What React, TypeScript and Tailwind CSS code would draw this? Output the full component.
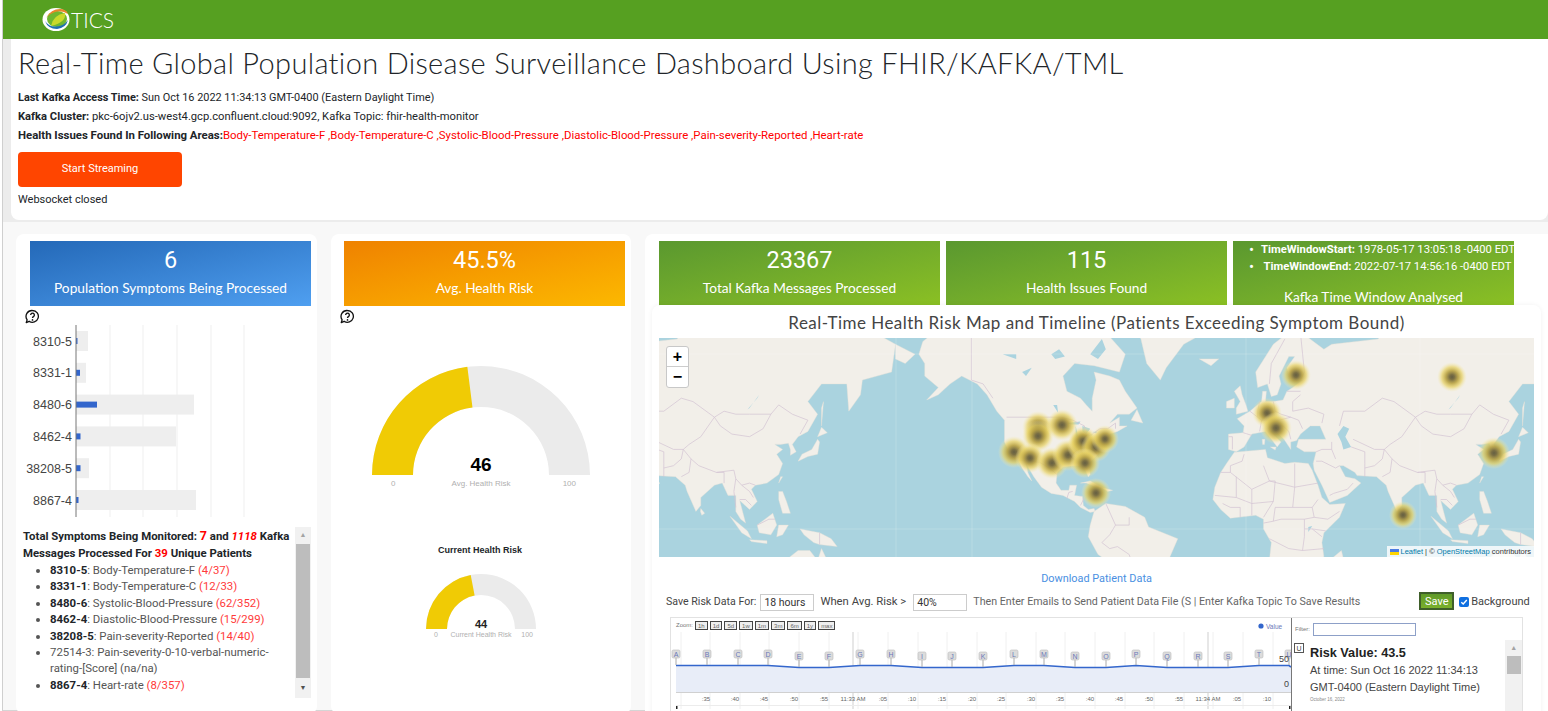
import React from "react";

const sans = "font-['Roboto','Noto_Sans',sans-serif]";

// map is a mercator projection, 701px per world
const MAP_W = 875;
const MAP_H = 219;
const WORLD = 701;
const project = (lon: number, lat: number): [number, number] => {
  const x = 587 + (lon * WORLD) / 360;
  const y = 189 - (WORLD / (2 * Math.PI)) * Math.log(Math.tan(Math.PI / 4 + (lat * Math.PI) / 360));
  return [x, y];
};
const toPath = (pts: number[], close = true) => {
  let d = "";
  for (let i = 0; i < pts.length; i += 2) {
    const [x, y] = project(pts[i], pts[i + 1]);
    d += (i === 0 ? "M" : "L") + x.toFixed(1) + " " + y.toFixed(1);
  }
  return close ? d + "Z" : d;
};

const land: number[][] = [
  // north america
  [-166,68.5,-156,71.3,-141,69.7,-128,72,-108,72,-80,73,-62,66,-65,62,-78,63.5,-88,64,-94,61,-92,57,-85,55,-82,53,-79,51,-79,55,-77,60,-78,62,-70,61,-65,60,-62,57,-56,52,-60,50,-66,50,-70,47,-65,49,-65,46,-61,46,-66,44,-70,43,-71,41.5,-74,40.5,-76,37,-76,35,-81,31,-80,26,-81,25,-82.5,28,-84,30,-89,30,-94,29.5,-97,27,-97.5,22,-95,18.5,-91,18.5,-90.5,21,-87,21,-88,16,-84,15.5,-83.5,11,-81,9,-78,9.5,-77.5,8,-80,7.5,-85,10,-88,13,-94,16,-100,17,-105,20,-109,25,-113,31,-112,27,-110,23,-112,25,-115,29,-117,32.5,-121,35,-124,40,-124,48,-128,51,-133,56,-138,59,-146,61,-152,59,-158,56,-164,54.5,-158,58,-165,61,-165,64,-168,66],
  // south america
  [-78,8,-72,12,-62,10.5,-52,5,-50,0,-35,-6,-39,-15,-41,-22,-48,-26,-58,-35,-70,-35,-70,-18,-76,-14,-81,-5,-80,1],
  // greenland
  [-54,69,-51,64,-44,60,-41,63,-32,68,-22,70,-25,75,-70,77],
  // africa
  [-6,35.8,10,37,11,33.5,20,31,25,31.5,32,31,34,28,37,21,39,15,43,11.5,51,12,48,5,40,-3,39,-8,40,-15,35,-20,33,-28,18,-34,12,-17,13,-8,9,-1,9,4,5,6,-4,5,-8,4.5,-13,9,-17,14,-16,20,-13,27,-10,31],
  // eurasia
  [-9,37,-9,43,-1.5,43.5,-1,46,-4.5,48.5,2,51,8,54,8.5,57,10.5,57,10,54,14,54,19,54.5,21,57,24,58,29,60,23,60,21,63,25,65.5,22,65.5,17,61,18,59,16,56,13,55.5,11,59,6,58,5,62,14,68,25,71,40,67,44,68,68,69,70,73,100,76,113,74,140,72,170,70,180,68,178,62,163,60,162,56,156,51,155,59,142,59,135,54,140,50,135,44,130,42,127,39,129,36,126,34.5,126,37,125,39.5,121,39,118,39,122,37,119,35,122,31,120,26,114,22,108,21,106,19,109,13,105,9,100,13.5,103,2,100.5,4,98,8,98,16,94,16,91,22,87,21,80,15,80,11,77.5,8,73,18,72,21,67,25,57,25.5,56,27,50,30,48,30,51,25,56,24,59,22,52,16,43,12.5,39,21,35,28,34.5,31,36,36,30,36,26,38,27,41,30,41,41,41,38,46,33,46,28,43,26,40.5,23,40,23,37,19.5,41,14,45,12.5,44,18,40,16,38,10,44,3,43,-1,38,-5,36],
  // chukotka tip past the date line
  [-180,68,-170,66,-175,64,-180,65],
  // islands
  [-5,50,1,51,0,53,-2,56,-3,58.5,-6,57,-3,54,-5,52],
  [-10,52,-6,52,-6,55,-10,54],
  [-24,65,-14,65,-18,63.5],
  [130,32,135,34,140,35,141,40,140,41,137,37,132,35],
  [140,42,145,43.5,142,45.5],
  [142,46,143,54,142,52],
  [120,22,122,25,121,25],
  [120,18,122,18,124,13,126,7,122,7,120,14],
  [109,1,117,7,119,1,116,-4,110,-3],
  [95,5.5,104,-2,106,-6,101,-3],
  [105,-6.5,114,-7,114,-8.5,106,-7.5],
  [119,-5,120,1,125,1,122,-4],
  [131,-1,141,-3,147,-6,150,-10,141,-9,138,-8,133,-4],
  [49,-12,50,-16,47,-25,44,-22,44,-16],
  [80,9.5,82,7,80.5,6,79.8,8],
  [-85,22,-80,23,-74,20,-77,20,-82,22],
  [-74,19.8,-68.5,18.5,-71,18],
  [-59,48,-53,47,-56,51.5],
  [113,-22,122,-18,130,-12,136,-12,140,-17,142,-11,146,-19,153,-26,113,-30],
  [12.5,38,15.5,38,15,36.7],
  [8.3,41,9.7,41,9.5,39,8.5,39],
];

const water: number[][] = [
  [50,46,53,45,51,42,54,38,50,37,49,40,47,43],
  [-92,47,-85,47.5,-86,46.5,-90,46.5],
  [-87.5,46,-86,42,-87.5,42],
  [-84,46,-80,45,-82,43,-84,44],
  [-83,42,-79,43,-79,42.5],
  [-79,43.8,-76.5,44,-77,43.3],
  [-99,53,-97,53,-96.5,50.5],
  [-125,66,-118,66,-118,65],
  [-115,62,-110,63,-113,61],
  [-100,66,-96,67,-93,65.5,-98,65],
  [-80,66,-74,69,-72,67,-76,65],
  [105,52,110,56,109,55,104,51.5],
  [33,-1,34,0.5,32,0,32,-2.5],
];

const borders: number[][] = [
  [-123,49,-95,49,-89,48,-83,46,-82,42,-79,43,-75,45,-71,45,-67,47,-67,45],
  [-141,69.7,-141,60,-135,59,-130,55],
  [-117,32.5,-106,31.5,-101,29,-97,26],
  [-92,14.5,-91,17.5,-89,18],
  [-83,15,-85,11],
  [-72,12,-67,1,-70,-4,-74,-8,-70,-11],
  [-60,5,-60,1,-67,1],
  [-58,-20,-60,-14,-66,-10,-70,-11],
  [2,51,6,49,8,48,7,44],
  [-1.5,43.5,3,42.5],
  [-9,42,-7,42,-7,37],
  [7,54,6,51,6,49],
  [14,54,15,51,18,50,23,49,27,48,29,45],
  [8,48,13,48,17,48,23,49],
  [14,46,19,46,22,44,23,41],
  [12,59,13,64,20,69],
  [28,70,30,62,28,60],
  [28,56,24,54,24,51,32,52,40,50,39,47],
  [21,57,28,57],
  [48,46,50,51,61,51,70,55,76,54,87,49],
  [87,49,92,51,98,50,105,50,116,50,120,53,127,50,135,48,131,43],
  [87,49,80,42,74,39,71,37,75,33,79,30,88,27,97,28,98,24,101,21,105,22,108,21],
  [116,50,112,45,105,42,96,43,90,46,87,49],
  [55,41,66,37,71,37],
  [54,38,61,36,61,31,61,25],
  [71,37,70,33,66,30,61,29],
  [75,33,74,27,70,25],
  [88,27,92,27,92,22],
  [98,24,97,18,98,10],
  [101,21,105,18,107,15],
  [100,14,103,14,106,11],
  [44,40,44,37,39,37,36,36],
  [46,33,44,37],
  [48,30,46,29,39,32,36,32],
  [55,22,52,19,45,17,43,16],
  [-8,27,-8,30,-2,32,-1,35],
  [-13,27,-8,27,3,19,12,23,25,20,37,22],
  [9,30,12,23,15,23,14,13,3,12,3,19],
  [25,31,25,20,24,10,34,10,37,14],
  [-16,16,-5,15,-5,25],
  [-5,15,3,12,3,6],
  [-12,12,-8,10,-3,10,-3,5],
  [14,13,9,5],
  [24,10,15,10,14,3,9,2],
  [34,10,35,5,42,4,48,8],
  [14,3,18,4,30,4,35,5],
  [30,4,30,-5,29,-12,22,-11,12,-6],
  [41,-2,34,-1,30,-1],
  [34,-1,39,-5],
  [29,-12,40,-11],
  [141,-3,141,-9],
  [109,1,115,4,118,4],
];

const heat: [number, number, number][] = [
  [637, 37, 15], [793, 39, 15], [608, 75, 15], [617, 90, 16],
  [379, 89, 16], [379, 98, 16], [403, 87, 16], [355, 114, 16], [371, 120, 15],
  [393, 125, 16], [409, 117, 16], [424, 108, 16], [424, 103, 15], [437, 109, 15], [446, 101, 14],
  [426, 125, 15], [437, 155, 15], [835, 115, 16], [744, 177, 14],
];

const seamsV = [237, 313, 587, 761];
const seamsH = [16, 191];

function WorldMap() {
  const landPath = land.map((p) => toPath(p)).join("");
  const waterPath = water.map((p) => toPath(p)).join("");
  const borderPath = borders.map((p) => toPath(p, false)).join("");
  return (
    <svg width={MAP_W} height={MAP_H} viewBox={`0 0 ${MAP_W} ${MAP_H}`} className="block bg-[#aad3df]">
      <defs>
        <radialGradient id="heatspot">
          <stop offset="0%" stopColor="#655f42" />
          <stop offset="16%" stopColor="#7a6f44" />
          <stop offset="42%" stopColor="#b9a345" stopOpacity="0.92" />
          <stop offset="68%" stopColor="#e6d060" stopOpacity="0.7" />
          <stop offset="100%" stopColor="#f7edb4" stopOpacity="0" />
        </radialGradient>
      </defs>
      {[0, -WORLD].map((dx) => (
        <g key={dx} transform={`translate(${dx} 0)`}>
          <path d={landPath} fill="#f2efe9" stroke="#e6e0d6" strokeWidth="0.4" strokeLinejoin="round" />
          <path d={waterPath} fill="#aad3df" />
          <path d={borderPath} fill="none" stroke="#d3c3d2" strokeWidth="0.7" />
        </g>
      ))}
      {seamsV.map((x) => (
        <line key={x} x1={x} x2={x} y1="0" y2={MAP_H} stroke="#ffffff" strokeOpacity="0.18" />
      ))}
      {seamsH.map((y) => (
        <line key={y} x1="0" x2={MAP_W} y1={y} y2={y} stroke="#ffffff" strokeOpacity="0.18" />
      ))}
      {heat.map(([x, y, r], i) => (
        <circle key={i} cx={x} cy={y} r={r} fill="url(#heatspot)" />
      ))}
    </svg>
  );
}

function Logo() {
  return (
    <svg width="28" height="25" viewBox="0 0 28 25">
      <ellipse cx="14" cy="12.5" rx="13.5" ry="11.5" fill="#ffffff" />
      <ellipse cx="15" cy="12" rx="10" ry="8" fill="#6fb72f" />
      <path d="M9 19 Q11 8 23 6 Q25 15 9 19Z" fill="#c9d92a" />
      <path d="M4 11 Q9 2 18 2 Q24 2 26 7 Q20 3 13 5 Q7 7 4 11Z" fill="#e8872a" />
      <path d="M3 14 Q6 22 15 22 Q24 21 26 13 Q22 19 14 19.5 Q7 20 3 14Z" fill="#1d6fb0" />
    </svg>
  );
}

function HelpIcon() {
  return (
    <svg width="15" height="15" viewBox="0 0 16 16" className="block">
      <path d="M8 1.6a6.3 6.3 0 1 1-3.6 11.5L1.3 14.5l1-3A6.3 6.3 0 0 1 8 1.6Z" fill="none" stroke="#111" strokeWidth="1.4" strokeLinejoin="round" />
      <path d="M6 6.3a2 2 0 1 1 3 1.8c-.7.4-1 .8-1 1.5" fill="none" stroke="#111" strokeWidth="1.4" />
      <circle cx="8" cy="11.6" r="0.9" fill="#111" />
    </svg>
  );
}

function Tile({ value, label, color, className }: { value: string; label: string; color: string; className: string }) {
  return (
    <div className={`h-[65px] flex flex-col items-center text-white ${color} ${className}`}>
      <div className="text-[23.5px] leading-[32px] mt-[3px]">{value}</div>
      <div className="text-[13.7px] leading-[18px] mt-[3px] font-['Lato',sans-serif]">{label}</div>
    </div>
  );
}

const bars = [
  { code: "8310-5", total: 12, hit: 1.5 },
  { code: "8331-1", total: 10, hit: 4 },
  { code: "8480-6", total: 118, hit: 21 },
  { code: "8462-4", total: 100, hit: 4.5 },
  { code: "38208-5", total: 13, hit: 4.5 },
  { code: "8867-4", total: 120, hit: 2.5 },
];

function BarChart() {
  return (
    <svg width="290" height="192" viewBox="0 0 290 192" className="block overflow-visible">
      {[110, 143, 177, 211, 244].map((x) => (
        <line key={x} x1={x - 30} x2={x - 30} y1="0" y2="192" stroke="#efefef" />
      ))}
      {bars.map((b, i) => {
        const y = 16 + i * 31.8;
        return (
          <g key={b.code}>
            <rect x="46" y={y - 10} width={b.total} height="20" fill="#eeeeee" />
            <rect x="46" y={y - 3} width={b.hit} height="6" fill="#3366cc" />
            <text x="42" y={y + 4.5} textAnchor="end" fontSize="12.5" fontFamily="Liberation Sans" fill="#444">
              {b.code}
            </text>
          </g>
        );
      })}
      <line x1="46" x2="46" y1="0" y2="192" stroke="#777" />
    </svg>
  );
}

// half donut, value is 0-100
function Gauge({ value, outer, inner }: { value: number; outer: number; inner: number }) {
  const w = outer * 2;
  const a = Math.PI * (1 - value / 100);
  const ox = outer + outer * Math.cos(a);
  const oy = outer - outer * Math.sin(a);
  const ix = outer + inner * Math.cos(a);
  const iy = outer - inner * Math.sin(a);
  const left = outer - inner;
  const right = outer + inner;
  return (
    <svg width={w} height={outer} viewBox={`0 0 ${w} ${outer}`} className="block">
      <path d={`M0 ${outer}A${outer} ${outer} 0 0 1 ${w} ${outer}L${right} ${outer}A${inner} ${inner} 0 0 0 ${left} ${outer}Z`} fill="#ebebeb" />
      <path d={`M0 ${outer}A${outer} ${outer} 0 0 1 ${ox} ${oy}L${ix} ${iy}A${inner} ${inner} 0 0 0 ${left} ${outer}Z`} fill="#f0cb05" />
    </svg>
  );
}

const flags = [
  ["A", 675, 0], ["B", 706, 0], ["C", 737, 0], ["D", 767, 0], ["E", 798, 2], ["F", 828, 2], ["G", 859, 0],
  ["H", 890, 0], ["I", 921, 2], ["J", 951, 2], ["K", 982, 2], ["L", 1013, 0], ["M", 1043, 0], ["N", 1074, 2],
  ["O", 1105, 2], ["P", 1135, 0], ["Q", 1166, 2], ["R", 1197, 2], ["S", 1227, 2], ["T", 1258, 0], ["U", 1288, 0],
] as const;

const ticks = [
  [":35", 705], [":40", 734], [":45", 763], [":50", 793], [":55", 823], ["11:33 AM", 852], [":05", 882], [":10", 911],
  [":15", 941], [":20", 971], [":25", 1000], [":30", 1030], [":35", 1059], [":40", 1089], [":45", 1118], [":50", 1148],
  [":55", 1178], ["11:34 AM", 1207], [":05", 1236], [":10", 1266],
] as const;

function Timeline() {
  const ox = 670;
  const line = flags.map(([, x, d]) => `${x - ox} ${d ? 49.5 : 47.5}`).join("L");
  return (
    <svg width="620" height="91" viewBox="0 0 620 91" className="block">
      {[680, 709, 739, 768, 798, 828, 857, 887, 917, 946, 976, 1005, 1035, 1064, 1094, 1124, 1153, 1183, 1212, 1242, 1272].map((x) => (
        <line key={x} x1={x - ox} x2={x - ox} y1="14" y2="91" stroke="#f0f0f0" />
      ))}
      <line x1={852 - ox} x2={852 - ox} y1="14" y2="91" stroke="#cfcfcf" />
      <line x1={1207 - ox} x2={1207 - ox} y1="14" y2="91" stroke="#cfcfcf" />
      <path d={`M${line}L${1290 - ox} 49L${1290 - ox} 74L5 74Z`} fill="#e8edf8" />
      <path d={`M${line}L${1290 - ox} 49`} fill="none" stroke="#3366cc" strokeWidth="1.6" />
      <line x1="5" x2={1290 - ox} y1="74.5" y2="74.5" stroke="#d0d0d0" />
      <line x1="5" x2={1290 - ox} y1="87.5" y2="87.5" stroke="#ececec" />
      <rect x="5" y="88" width="1.5" height="3" fill="#222" />
      <rect x={1288 - ox} y="88" width="1.5" height="3" fill="#222" />
      {flags.map(([l, x, d]) => (
        <g key={l}>
          <line x1={x - ox} x2={x - ox} y1={40 + d} y2={47 + d} stroke="#aaa" />
          <rect x={x - ox - 4} y={32 + d} width="8" height="8" rx="1.5" fill="#dcdcdc" stroke="#bbb" strokeWidth="0.6" />
          <text x={x - ox} y={38.5 + d} textAnchor="middle" fontSize="7" fontFamily="Liberation Sans" fill="#6a78b8">{l}</text>
        </g>
      ))}
      {ticks.map(([t, x], i) => (
        <text key={i} x={x - ox} y="83" textAnchor="middle" fontSize="6" fontFamily="Liberation Sans" fill="#666">{t}</text>
      ))}
      <text x={1288 - ox} y="44" textAnchor="end" fontSize="9" fontFamily="Liberation Sans" fill="#444">50</text>
      <text x={1288 - ox} y="69" textAnchor="end" fontSize="9" fontFamily="Liberation Sans" fill="#444">0</text>
      <circle cx={1260 - ox} cy="8" r="2.6" fill="#3366cc" />
      <text x={1265 - ox} y="10.5" fontSize="6.5" fontFamily="Liberation Sans" fill="#6a78b8">Value</text>
    </svg>
  );
}

const symptoms = [
  { code: "8310-5", name: "Body-Temperature-F", count: "(4/37)" },
  { code: "8331-1", name: "Body-Temperature-C", count: "(12/33)" },
  { code: "8480-6", name: "Systolic-Blood-Pressure", count: "(62/352)" },
  { code: "8462-4", name: "Diastolic-Blood-Pressure", count: "(15/299)" },
  { code: "38208-5", name: "Pain-severity-Reported", count: "(14/40)" },
];

const zoomBtns = ["1h", "1d", "5d", "1w", "1m", "3m", "6m", "1y", "max"];

export default function App() {
  return (
    <div className="w-[1548px] h-[711px] overflow-hidden bg-white pl-[2px]">
      <div className={`h-full bg-[#f8f8f8] border-l border-l-[#cfcfcf] border-b border-b-[#d5d5d5] text-[#212529] ${sans}`}>
        <div className="h-[39px] bg-[#56a021] flex items-center pl-[39px]">
          <Logo />
          <span className="ml-[1px] text-[21px] leading-none text-white font-['Lato',sans-serif] font-light">TICS</span>
        </div>

        <div className="h-[183px] bg-[#ececec] pb-[2px]">
          <div className="ml-[8px] h-[181px] bg-white rounded-b-[8px] pl-[7px] pt-[6px]">
            <h1 className="text-[29px] leading-[36px] font-['Lato',sans-serif] font-light tracking-[0.33px] text-[#212529]">
              Real-Time Global Population Disease Surveillance Dashboard Using FHIR/KAFKA/TML
            </h1>
            <div className="leading-[18.5px] mt-[8px]">
              <div className="text-[10.9px]"><b>Last Kafka Access Time:</b> Sun Oct 16 2022 11:34:13 GMT-0400 (Eastern Daylight Time)</div>
              <div className="text-[11.2px]"><b>Kafka Cluster:</b> pkc-6ojv2.us-west4.gcp.confluent.cloud:9092, Kafka Topic: fhir-health-monitor</div>
              <div className="text-[11.4px]"><b>Health Issues Found In Following Areas:</b><span className="text-[#ff0000]">Body-Temperature-F ,Body-Temperature-C ,Systolic-Blood-Pressure ,Diastolic-Blood-Pressure ,Pain-severity-Reported ,Heart-rate</span></div>
            </div>
            <button className="block mt-[7px] w-[164px] h-[35px] pt-[1px] rounded-[4px] bg-[#ff4500] text-white text-[11px]">Start Streaming</button>
            <div className="text-[11px] leading-[14px] mt-[6px]">Websocket closed</div>
          </div>
        </div>

        <div className="flex items-start mt-[12px] ml-[13px] gap-[14px]">
          {/* left column */}
          <div className="w-[301px] h-[480px] shrink-0 bg-white rounded-[8px] pl-[14px] pt-[7px]">
            <Tile value="6" label="Population Symptoms Being Processed" color="bg-gradient-to-br from-[#2469b8] to-[#4f9ff0]" className="w-[281px]" />
            <div className="-ml-[5px] mt-[3px]"><HelpIcon /></div>
            <div className="mt-[1px]"><BarChart /></div>
            <div className="flex mt-[10px] text-[11.4px]">
              <div className="w-[272px] -ml-[7px] leading-[17px]">
                <div className="font-bold text-[#212529] whitespace-nowrap">
                  <div>Total Symptoms Being Monitored: <span className="text-[#ff0000] text-[12.5px]">7</span> and <i className="text-[#ff0000]">1118</i> Kafka</div>
                  <div>Messages Processed For <span className="text-[#ff0000]">39</span> Unique Patients</div>
                </div>
                <ul className="list-disc pl-[27px] leading-[16.4px] text-[#555]">
                  {symptoms.map((s) => (
                    <li key={s.code}><b className="text-[#212529]">{s.code}</b>: {s.name} <span className="text-[#ff3b3b]">{s.count}</span></li>
                  ))}
                  <li>72514-3: Pain-severity-0-10-verbal-numeric-<br />rating-[Score] (na/na)</li>
                  <li><b className="text-[#212529]">8867-4</b>: Heart-rate <span className="text-[#ff3b3b]">(8/357)</span></li>
                </ul>
              </div>
              <div className="w-[16px] h-[171px] bg-[#f1f1f1] flex flex-col items-center">
                <span className="text-[#a3a3a3] text-[7px] leading-[17px]">▲</span>
                <div className="w-[14px] h-[134px] bg-[#bdbdbd]"></div>
                <span className="text-[#505050] text-[7px] leading-[20px]">▼</span>
              </div>
            </div>
          </div>

          {/* gauges */}
          <div className="w-[300px] h-[480px] shrink-0 bg-white rounded-[8px] pl-[13px] pt-[7px]">
            <Tile value="45.5%" label="Avg. Health Risk" color="bg-gradient-to-br from-[#ef8200] to-[#fcb800]" className="w-[281px]" />
            <div className="-ml-[4px] mt-[3px]"><HelpIcon /></div>
            <div className="w-[218px] ml-[28px] mt-[42px]">
              <Gauge value={46} outer={109} inner={68} />
              <div className="relative h-[16px] text-[8px] leading-[10px] text-[#b0b0b0] font-['Liberation_Sans',sans-serif]">
                <span className="absolute left-[19px] top-[4px]">0</span>
                <span className="absolute left-0 right-0 top-[4px] text-center">Avg. Health Risk</span>
                <span className="absolute right-[14px] top-[4px]">100</span>
                <span className="absolute left-0 right-0 -top-[21px] text-center text-[19px] leading-[22px] font-bold text-black">46</span>
              </div>
            </div>
            <div className="text-[9px] leading-[12px] font-bold text-center w-[272px] mt-[53px] font-['Liberation_Sans',sans-serif]">Current Health Risk</div>
            <div className="w-[110px] ml-[82px] mt-[18px]">
              <Gauge value={44} outer={55} inner={34} />
              <div className="relative h-[12px] text-[7px] leading-[8px] text-[#b0b0b0] font-['Liberation_Sans',sans-serif] whitespace-nowrap">
                <span className="absolute left-[8px] top-[2px]">0</span>
                <span className="absolute left-0 right-0 top-[2px] text-center">Current Health Risk</span>
                <span className="absolute right-[3px] top-[2px]">100</span>
                <span className="absolute left-0 right-0 -top-[11px] text-center text-[11px] leading-[13px] font-bold text-[#222]">44</span>
              </div>
            </div>
          </div>

          {/* right column */}
          <div className="flex-1 h-[480px] bg-white rounded-tl-[8px] pt-[7px] relative">
            <div className="flex pl-[14px] gap-[6px]">
              <Tile value="23367" label="Total Kafka Messages Processed" color="bg-gradient-to-br from-[#5a982f] to-[#8bc023]" className="w-[281px]" />
              <Tile value="115" label="Health Issues Found" color="bg-gradient-to-br from-[#5a982f] to-[#8bc023]" className="w-[281px]" />
              <div className="w-[281px] h-[65px] text-white bg-gradient-to-br from-[#5a982f] to-[#8bc023] text-[11.25px] leading-[16.5px]">
                <div className="text-center pt-[1px] whitespace-nowrap">
                  <div className="relative"><span className="absolute left-[16px] text-[15px]">•</span><span className="ml-[28px]"><b>TimeWindowStart:</b> 1978-05-17 13:05:18 -0400 EDT</span></div>
                  <div className="relative"><span className="absolute left-[16px] text-[15px]">•</span><span className="ml-[28px]"><b>TimeWindowEnd:</b> 2022-07-17 14:56:16 -0400 EDT</span></div>
                </div>
                <div className="text-[13.7px] leading-[18px] text-center mt-[13px] font-['Lato',sans-serif]">Kafka Time Window Analysed</div>
              </div>
            </div>

            <div className="ml-[7px] w-[889px] h-[410px] bg-white rounded-t-[8px] -mt-[1px] shadow-[0_0_5px_rgba(0,0,0,0.06)] relative">
              <div className="h-[33px] text-center text-[17px] leading-[35px] font-['Lato',sans-serif] text-[#444] tracking-[0.47px]">
                Real-Time Health Risk Map and Timeline (Patients Exceeding Symptom Bound)
              </div>
              <div className="ml-[7px] w-[875px] relative">
                <WorldMap />
                <div className="absolute left-[7px] top-[8px] w-[23px] bg-white rounded-[3px] border border-[#c8c8c8] text-black font-bold font-['Liberation_Sans',sans-serif] text-center">
                  <div className="h-[20px] leading-[19px] text-[16px] border-b border-[#ccc]">+</div>
                  <div className="h-[20px] leading-[19px] text-[16px]">−</div>
                </div>
                <div className="absolute right-0 bottom-0 h-[11px] pl-[3px] pr-[3px] bg-white/80 flex items-center text-[7.5px] leading-none text-[#333] font-['Liberation_Sans',sans-serif] whitespace-nowrap">
                  <svg width="9" height="6" viewBox="0 0 9 6" className="mr-[2px]"><rect width="9" height="3" fill="#4c7be1" /><rect y="3" width="9" height="3" fill="#ffd500" /></svg>
                  <span className="text-[#0078a8]">Leaflet</span>&nbsp;| ©&nbsp;<span className="text-[#0078a8]">OpenStreetMap</span>&nbsp;contributors
                </div>
              </div>

              <div className="text-center text-[10.9px] leading-[14px] text-[#4a90e2] mt-[15px]">Download Patient Data</div>
              <div className="flex items-center pl-[14px] h-[20px] mt-[6px] whitespace-nowrap text-[#444]">
                <span className="text-[10.6px]">Save Risk Data For:</span>
                <div className="ml-[4px] w-[54px] h-[17px] border border-[#ccc] text-[10.5px] leading-[16px] pl-[3px] text-[#333]">18 hours</div>
                <span className="ml-[6px] text-[11.3px]">When Avg. Risk &gt;</span>
                <div className="ml-[7px] w-[54px] h-[17px] border border-[#ccc] text-[10.5px] leading-[16px] pl-[3px] text-[#333]">40%</div>
                <span className="ml-[6px] text-[10.7px] text-[#666] w-[446px] shrink-0">Then Enter Emails to Send Patient Data File (S | Enter Kafka Topic To Save Results</span>
                <div className="w-[35px] h-[18px] -mt-[2px] bg-gradient-to-b from-[#5f9a28] to-[#7ab02c] border-2 border-[#3f5f2a] text-white text-[11px] leading-[15px] text-center">Save</div>
                <div className="ml-[5px] w-[10px] h-[10px] bg-[#0f6fe0] rounded-[2px] flex items-center justify-center">
                  <svg width="8" height="8" viewBox="0 0 8 8"><path d="M1.3 4.2 3.2 6 6.8 2" fill="none" stroke="#fff" strokeWidth="1.4" /></svg>
                </div>
                <span className="ml-[2px] text-[11px]">Background</span>
              </div>

              {/* annotation chart */}
              <div className="ml-[18px] w-[853px] h-[100px] mt-[5px] border border-[#e2e2e2] flex font-['Liberation_Sans',sans-serif]">
                <div className="w-[620px] shrink-0 relative">
                  <div className="absolute left-[5px] top-[3px] flex items-center text-[6px] text-[#777]">
                    <span className="mr-[2px]">Zoom:</span>
                    <div className="flex gap-[2px]">
                      {zoomBtns.map((z) => (
                        <span key={z} className="h-[9px] px-[2px] min-w-[10px] text-center border border-[#444] bg-[#eee] leading-[8px] text-[6px] text-[#666]">{z}</span>
                      ))}
                    </div>
                  </div>
                  <Timeline />
                </div>
                <div className="flex-1 border-l border-[#777] min-w-0">
                  <div className="flex items-center h-[22px] pl-[3px] text-[6px] text-[#777]">
                    <span>Filter:</span>
                    <div className="ml-[3px] w-[103px] h-[13px] border border-[#8da0c8]"></div>
                  </div>
                  <div className="flex">
                    <div className="w-[213px] relative pl-[18px] pt-[5px]">
                      <span className="absolute left-[2px] top-[3px] w-[10px] h-[10px] border border-[#555] text-[7px] leading-[9px] text-center text-[#444]">U</span>
                      <div className="text-[12.7px] leading-[17px] font-bold text-[#222]">Risk Value: 43.5</div>
                      <div className="text-[11px] leading-[16.5px] text-[#444]">At time: Sun Oct 16 2022 11:34:13 GMT-0400 (Eastern Daylight Time)</div>
                      <div className="text-[4.5px] leading-[8px] mt-[1px] text-[#888]">October 16, 2022</div>
                    </div>
                    <div className="w-[17px] h-[78px] bg-[#f1f1f1] flex flex-col items-center ml-[5px]">
                      <span className="text-[#a3a3a3] text-[7px] leading-[16px]">▲</span>
                      <div className="w-[14px] h-[18px] bg-[#bdbdbd]"></div>
                    </div>
                  </div>
                </div>
              </div>
            </div>
          </div>
        </div>
      </div>
    </div>
  );
}
